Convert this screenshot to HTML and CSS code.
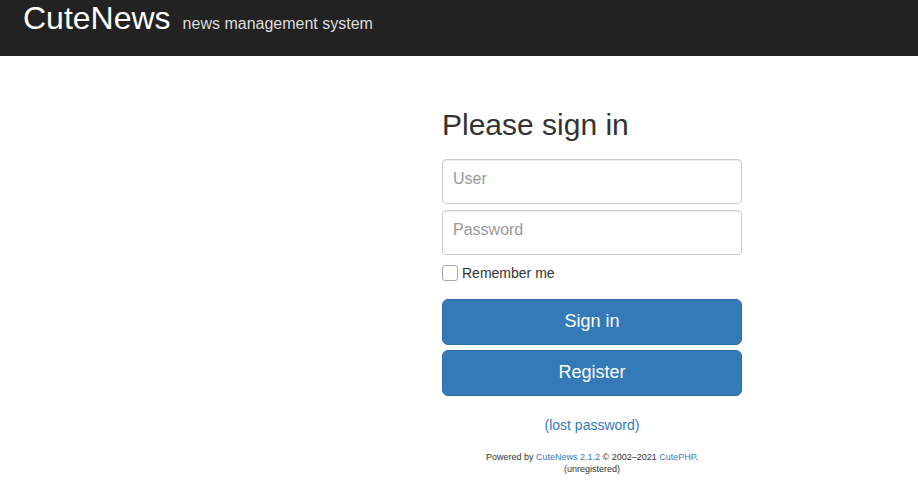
FILE: index.html
```html
<!DOCTYPE html>
<html lang="en">
<head>
<meta charset="utf-8">
<title>CuteNews - Sign in</title>
<link rel="stylesheet" href="styles.css">
</head>
<body>
<header class="navbar">
  <span class="brand">CuteNews</span>
  <span class="tagline">news management system</span>
</header>
<main class="page">
  <form class="signin">
    <h2 class="signin-title">Please sign in</h2>
    <input class="field field-user" type="text" placeholder="User">
    <input class="field field-pass" type="password" placeholder="Password">
    <label class="remember"><input class="check" type="checkbox"> Remember me</label>
    <button class="btn btn-signin" type="button">Sign in</button>
    <button class="btn" type="button">Register</button>
    <div class="lost"><a href="#">(lost password)</a></div>
    <div class="footer">
      <div>Powered by <a href="#">CuteNews 2.1.2</a> © 2002–2021 <a href="#">CutePHP</a>.</div>
      <div>(unregistered)</div>
    </div>
  </form>
</main>
</body>
</html>
```
FILE: styles.css
```css
html, body {
  margin: 0;
  padding: 0;
  background: #fff;
}
body {
  font-family: "Liberation Sans", Arial, sans-serif;
  font-size: 14px;
  line-height: 20px;
  color: #333;
}
.navbar {
  background: #222;
  height: 56px;
  box-sizing: border-box;
  padding: 2px 0 0 23px;
  display: flex;
  align-items: baseline;
  gap: 12px;
}
.brand {
  font-size: 32px;
  line-height: 32px;
  color: #fff;
}
.tagline {
  font-size: 16px;
  color: #ddd;
}
.page {
  display: flex;
  padding-left: 442px;
}
.signin {
  width: 300px;
  display: flex;
  flex-direction: column;
}
.signin-title {
  font-size: 30px;
  line-height: 33px;
  font-weight: 500;
  margin: 52px 0 18px;
  color: #333;
}
.field {
  box-sizing: border-box;
  height: 45px;
  width: 100%;
  margin: 0;
  padding: 0 10px 5px;
  border: 1px solid #ccc;
  border-radius: 4px;
  font-family: inherit;
  font-size: 16px;
  color: #555;
  background: #fff;
  outline: none;
  box-shadow: inset 0 1px 1px rgba(0,0,0,.075);
}
.field::placeholder {
  color: #999;
}
.field-user {
  margin-bottom: 6px;
}
.field-pass {
  margin-bottom: 8px;
}
.remember {
  display: flex;
  align-items: center;
  gap: 4px;
  height: 20px;
  margin-bottom: 16px;
  font-size: 14px;
}
.check {
  appearance: none;
  -webkit-appearance: none;
  box-sizing: border-box;
  width: 16px;
  height: 16px;
  margin: 0;
  border: 1px solid #a8a8a8;
  border-radius: 3px;
  background: #fff;
}
.btn {
  box-sizing: border-box;
  height: 46px;
  width: 100%;
  margin: 0;
  padding: 0 0 2px;
  border: 1px solid #2e6da4;
  border-radius: 6px;
  background: #337ab7;
  color: #fff;
  font-family: inherit;
  font-size: 18px;
  cursor: pointer;
}
.btn-signin {
  margin-bottom: 5px;
}
.lost {
  text-align: center;
  margin-top: 19px;
  font-size: 14px;
}
a {
  color: #337ab7;
  text-decoration: none;
}
.footer {
  margin-top: 16px;
  text-align: center;
  font-size: 9px;
  line-height: 12px;
}
```
